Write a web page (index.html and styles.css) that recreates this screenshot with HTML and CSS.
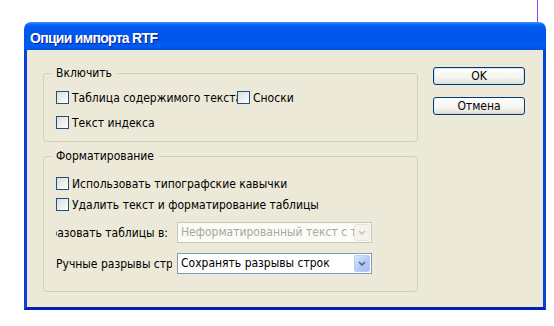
FILE: index.html
```html
<!DOCTYPE html>
<html>
  <head>
    <title>Опции импорта RTF</title>
    <link rel="stylesheet" href="styles.css">
  </head>
  <body>
    <!-- Import options dialog -->
    <div class="window">
      <div class="titlebar">Опции импорта RTF</div>
      <div class="client">
        <div class="groups">
          <fieldset class="group group-include">
            <legend>Включить</legend>
            <div class="row">
              <label class="check check-toc"><span class="box"></span><span>Таблица содержимого текста</span></label>
              <label class="check"><span class="box"></span><span>Сноски</span></label>
            </div>
            <div class="row">
              <label class="check"><span class="box"></span><span>Текст индекса</span></label>
            </div>
          </fieldset>

          <fieldset class="group group-format">
            <legend>Форматирование</legend>
            <div class="row">
              <label class="check"><span class="box"></span><span>Использовать типографские кавычки</span></label>
            </div>
            <div class="row row-tight">
              <label class="check"><span class="box"></span><span>Удалить текст и форматирование таблицы</span></label>
            </div>
            <div class="row row-combo">
              <div class="combo-label combo-label-right"><span>Преобразовать таблицы в:</span></div>
              <div class="combo combo-disabled">
                <span class="combo-value">Неформатированный текст с табуляцией</span>
                <span class="combo-arrow">
                  <svg width="8" height="5" viewBox="0 0 8 5"><path d="M1 1l3 3 3-3" fill="none" stroke="#c9c7ba" stroke-width="1.6"/></svg>
                </span>
              </div>
            </div>
            <div class="row row-combo">
              <div class="combo-label"><span>Ручные разрывы строк:</span></div>
              <div class="combo">
                <span class="combo-value">Сохранять разрывы строк</span>
                <span class="combo-arrow">
                  <svg width="8" height="5" viewBox="0 0 8 5"><path d="M1 1l3 3 3-3" fill="none" stroke="#4d6185" stroke-width="1.6"/></svg>
                </span>
              </div>
            </div>
          </fieldset>
        </div>

        <div class="buttons">
          <button class="btn btn-default">OK</button>
          <button class="btn">Отмена</button>
        </div>
      </div>
    </div>
  </body>
</html>
```

FILE: styles.css
```css
body {
  margin: 0;
  background: #fff linear-gradient(#a53cf2, #a53cf2) no-repeat 537px 0 / 1px 100%;
  font-family: "DejaVu Sans Condensed", "DejaVu Sans", sans-serif;
  font-stretch: condensed;
  font-size: 12px;
  color: #000;
}

.window {
  width: 522px;
  margin: 22px 0 0 24px;
}

.titlebar {
  height: 28px;
  box-sizing: border-box;
  padding: 3px 0 0 6px;
  border-radius: 7px 7px 0 0;
  background: linear-gradient(180deg, #3d95ff 0%, #0a62f2 10%, #0058ee 25%, #0055e8 60%, #005cf4 85%, #0050df 100%);
  color: #fff;
  font-family: "Liberation Sans", Arial, sans-serif;
  font-stretch: normal;
  font-size: 14px;
  font-weight: bold;
  line-height: 26px;
  letter-spacing: -0.7px;
  text-shadow: 1px 1px #0a1e8a;
}

.client {
  display: flex;
  gap: 15px;
  height: 260px;
  box-sizing: border-box;
  padding: 16px 0 0 16px;
  border: 3px solid #0842d6;
  border-top: 0;
  border-bottom-color: #0024b0;
  background: #ece9d8;
}

.groups {
  display: flex;
  flex-direction: column;
  gap: 7px;
  width: 375px;
}

.group {
  margin: 0;
  min-width: 0;
  padding: 9px 12px 11px;
  border: 1px solid #d0d0bf;
  border-radius: 3px;
}

.group legend {
  margin-left: -5px;
  padding: 0 5px;
  line-height: 15px;
}

.group-format {
  padding-top: 12px;
  padding-bottom: 17px;
}

.row {
  display: flex;
  align-items: center;
  height: 15px;
}

.row + .row {
  margin-top: 10px;
}

.row + .row-tight {
  margin-top: 6px;
}

.row-combo {
  height: 21px;
}

.check {
  display: flex;
  align-items: center;
  gap: 3px;
  white-space: nowrap;
}

.check-toc {
  width: 181px;
  overflow: hidden;
}

.box {
  flex: none;
  width: 13px;
  height: 13px;
  box-sizing: border-box;
  border: 1px solid #1c5180;
  background: linear-gradient(135deg, #dcdcd7, #fff);
}

.combo-label {
  display: flex;
  width: 116px;
  margin-right: 5px;
  overflow: hidden;
  white-space: nowrap;
}

.combo-label-right {
  justify-content: flex-end;
  padding-right: 4px;
  width: 112px;
}

.combo {
  display: flex;
  align-items: stretch;
  width: 195px;
  height: 21px;
  box-sizing: border-box;
  padding: 1px;
  border: 1px solid #7f9db9;
  background: #fff;
}

.combo-value {
  flex: 1;
  padding-left: 2px;
  overflow: hidden;
  white-space: nowrap;
  line-height: 17px;
}

.combo-arrow {
  display: flex;
  align-items: center;
  justify-content: center;
  width: 16px;
  border-radius: 2px;
  border: 1px solid #b9ccf6;
  box-sizing: border-box;
  background: linear-gradient(135deg, #dbe6fd, #b3c8f7 60%, #a6bdf3);
}

.combo-disabled {
  border-color: #c9c7ba;
  background: #fbfbf8;
}

.combo-disabled .combo-value {
  color: #aca899;
}

.combo-disabled .combo-arrow {
  border-color: #e8e6dc;
  background: #f4f3ee;
}

.buttons {
  display: flex;
  flex-direction: column;
  gap: 12px;
  margin-top: 1px;
}

.btn {
  width: 92px;
  height: 18px;
  padding: 0;
  border: 1px solid #003c74;
  border-radius: 3px;
  background: linear-gradient(180deg, #fff 0%, #f4f4f0 60%, #e6e4da 90%, #d6d0c5 100%);
  font-family: inherit;
  font-stretch: inherit;
  font-size: 12px;
  line-height: 16px;
  color: #000;
}

.btn-default {
  box-shadow: inset 0 0 0 1px #cee0fa;
}
```
